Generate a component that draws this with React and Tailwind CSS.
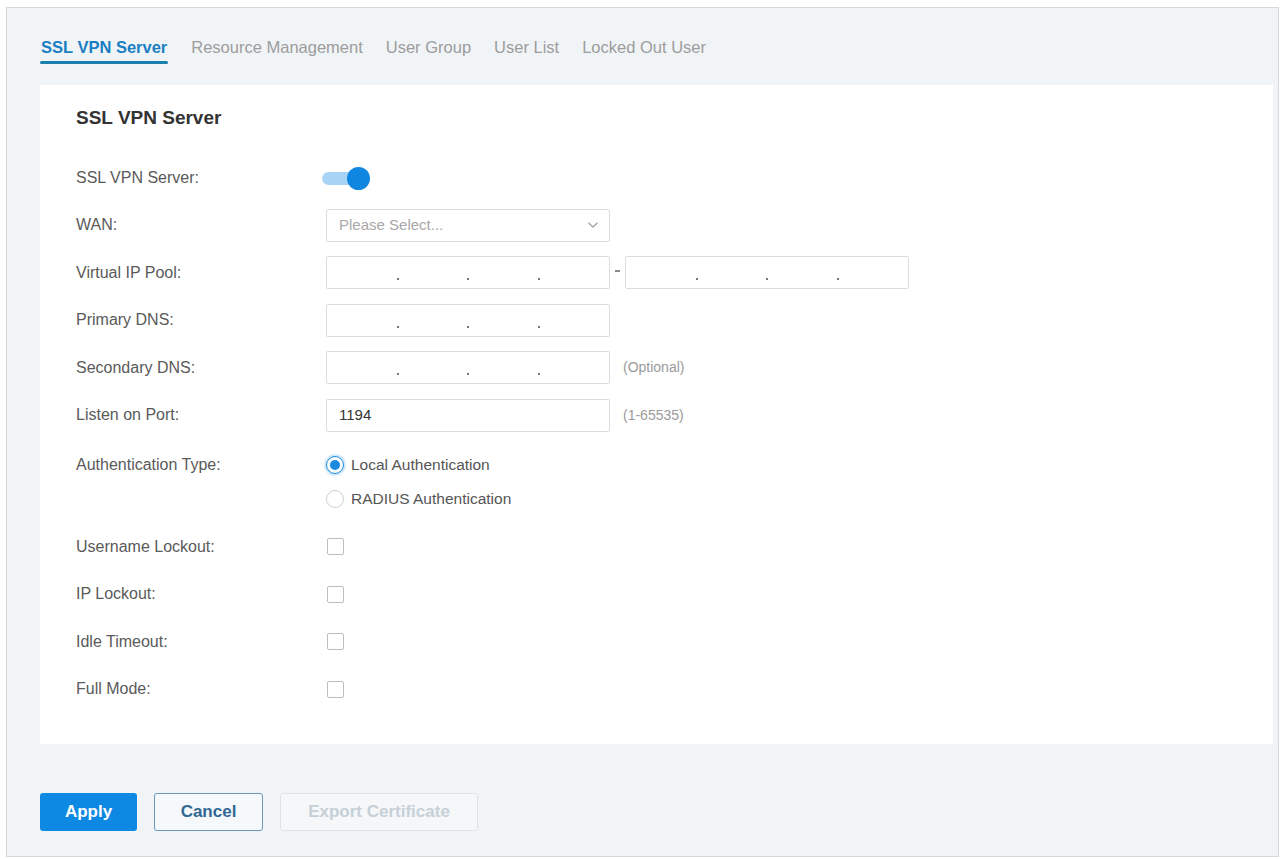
import React from "react";

const font = { fontFamily: '"Liberation Sans", Arial, sans-serif' };

function Tabs() {
  const tabs = ["SSL VPN Server", "Resource Management", "User Group", "User List", "Locked Out User"];
  return (
    <div className="flex items-start gap-[23px] pl-[33px] pt-[29px] h-[77px]">
      {tabs.map((t, i) =>
        i === 0 ? (
          <div key={t} className="flex flex-col">
            <span className="text-[16.5px] leading-[20px] font-bold text-[#1a7fc2] px-[1px]">{t}</span>
            <span className="mt-[4px] h-[3px] rounded-full bg-[#1b7fae]" />
          </div>
        ) : (
          <span key={t} className="text-[16.5px] leading-[20px] text-[#9c9c9c]">{t}</span>
        )
      )}
    </div>
  );
}

function Row({ label, children, h = "h-[47.5px]" }) {
  return (
    <div className={`flex items-center ${h}`}>
      <div className="w-[250px] shrink-0 text-[16px] text-[#5a5a5a]">{label}</div>
      <div className="flex items-center">{children}</div>
    </div>
  );
}

function IpBox() {
  return (
    <div className="w-[284px] h-[33px] border border-[#dcdcdc] rounded-[2px] bg-white flex">
      {[0, 1, 2, 3].map((i) => (
        <div key={i} className="flex-1 flex items-end justify-end pb-[8px]">
          {i < 3 && <span className="w-[2px] h-[2px] bg-[#777] translate-x-[1px]" />}
        </div>
      ))}
    </div>
  );
}

function Hint({ children }) {
  return <span className="ml-[13px] text-[14px] text-[#9a9a9a]">{children}</span>;
}

function Checkbox() {
  return <span className="ml-[1px] w-[17px] h-[17px] border border-[#bdbdbd] rounded-[2px] bg-white" />;
}

function Radio({ checked, label }) {
  return (
    <div className="flex items-center gap-[7px]">
      {checked ? (
        <span className="w-[18px] h-[18px] rounded-full border border-[#1a8ae0] bg-white flex items-center justify-center shadow-[0_0_0_2px_rgba(26,138,224,0.18)]">
          <span className="w-[10px] h-[10px] rounded-full bg-[#1a8ae0]" />
        </span>
      ) : (
        <span className="w-[18px] h-[18px] rounded-full border border-[#cfcfcf] bg-white" />
      )}
      <span className="text-[15.5px] text-[#555]">{label}</span>
    </div>
  );
}

export default function App() {
  return (
    <div className="w-[1282px] h-[859px] bg-white pt-[7px] pl-[6px]" style={font}>
      <div className="w-[1273px] h-[850px] border border-[#d6d9dc] bg-[#f1f4f7] flex flex-col">
        <Tabs />
        <div className="ml-[33px] mr-[5px] h-[659px] bg-white pl-[36px] pt-[22px]">
          <div className="text-[19px] leading-[22px] font-bold text-[#333]">SSL VPN Server</div>
          <div className="mt-[25px] flex flex-col">
            <Row label="SSL VPN Server:">
              <div className="relative w-[48px] h-[22px] -ml-[4px]">
                <span className="absolute left-0 top-[5px] w-[34px] h-[13px] rounded-full bg-[#a9d3f5]" />
                <span className="absolute right-0 top-0 w-[23px] h-[23px] rounded-full bg-[#0f86e0]" />
              </div>
            </Row>
            <Row label="WAN:">
              <div className="w-[284px] h-[33px] border border-[#dcdcdc] rounded-[2px] bg-white flex items-center justify-between pl-[12px] pr-[10px]">
                <span className="text-[15px] text-[#a8a8a8]">Please Select...</span>
                <svg width="12" height="8" viewBox="0 0 12 8" fill="none">
                  <path d="M1.5 1.8 6 6 10.5 1.8" stroke="#a5a5a5" strokeWidth="1.3" />
                </svg>
              </div>
            </Row>
            <Row label="Virtual IP Pool:">
              <IpBox />
              <span className="mx-[5px] w-[5px] h-[1.5px] bg-[#888] -translate-y-[2px]" />
              <IpBox />
            </Row>
            <Row label="Primary DNS:">
              <IpBox />
            </Row>
            <Row label="Secondary DNS:">
              <IpBox />
              <Hint>(Optional)</Hint>
            </Row>
            <Row label="Listen on Port:">
              <div className="w-[284px] h-[33px] border border-[#dcdcdc] rounded-[2px] bg-white flex items-center pl-[12px]">
                <span className="text-[15px] text-[#333]">1194</span>
              </div>
              <Hint>(1-65535)</Hint>
            </Row>
            <div className="flex mt-[9px]">
              <div className="w-[250px] shrink-0 text-[16px] text-[#5a5a5a] h-[34px] flex items-center">Authentication Type:</div>
              <div className="flex flex-col">
                <div className="h-[34px] flex items-center"><Radio checked label="Local Authentication" /></div>
                <div className="h-[34px] flex items-center"><Radio label="RADIUS Authentication" /></div>
              </div>
            </div>
            <div className="mt-[7px] flex flex-col">
              <Row label="Username Lockout:"><Checkbox /></Row>
              <Row label="IP Lockout:"><Checkbox /></Row>
              <Row label="Idle Timeout:"><Checkbox /></Row>
              <Row label="Full Mode:"><Checkbox /></Row>
            </div>
          </div>
        </div>
        <div className="flex items-center gap-[17px] pl-[33px] mt-[49px]">
          <button className="w-[97px] h-[38px] rounded-[3px] bg-[#0e89e3] text-white text-[17px] font-bold">Apply</button>
          <button className="w-[109px] h-[38px] rounded-[3px] border border-[#6f97b5] bg-[#f6f9fb] text-[#2f6893] text-[17px] font-bold">Cancel</button>
          <button className="w-[198px] h-[38px] rounded-[3px] border border-[#dde3e8] bg-[#f5f7f9] text-[#c6d0d8] text-[17px] font-bold">Export Certificate</button>
        </div>
      </div>
    </div>
  );
}
